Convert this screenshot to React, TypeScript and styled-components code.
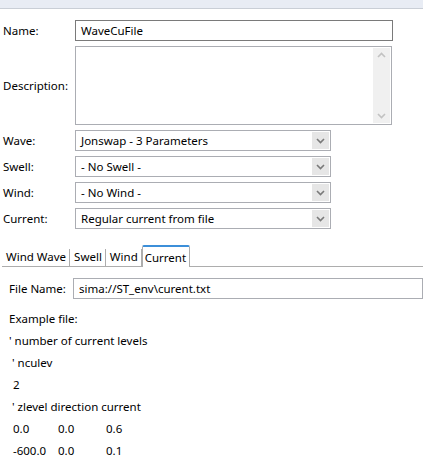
import React from 'react';
import styled, { createGlobalStyle } from 'styled-components';

const GlobalStyle = createGlobalStyle`
    html, body {
        margin: 0;
        padding: 0;
        background: #ffffff;
    }
    body {
        font-family: "Noto Sans", "Open Sans", sans-serif;
        font-size: 11.5px;
        color: #000000;
    }
`;

const Page = styled.div`
    width: 423px;
    height: 473px;
    overflow: hidden;
    background: #ffffff;
`;

const TopBar = styled.div`
    height: 8px;
    background: #e8ecf4;
    border-bottom: 1px solid #c9ced6;
`;

const Form = styled.div`
    display: grid;
    grid-template-columns: 72px auto;
    row-gap: 5px;
    padding: 11px 0 0 3px;
    align-items: center;
    justify-items: start;
`;

const Label = styled.div`
    line-height: 16px;
`;

const TextInput = styled.div<{ $width: number; $dark?: boolean }>`
    box-sizing: border-box;
    width: ${(p) => p.$width}px;
    height: 21px;
    border: 1px solid ${(p) => (p.$dark ? '#7a7a7a' : '#abadb3')};
    padding: 0 5px;
    display: flex;
    align-items: center;
    white-space: nowrap;
    overflow: hidden;
`;

const TextArea = styled.div`
    box-sizing: border-box;
    width: 317px;
    height: 79px;
    border: 1px solid #abadb3;
    display: flex;
    justify-content: flex-end;
    padding: 1px;
`;

const ScrollBar = styled.div`
    width: 17px;
    background: #f0f0f0;
    display: flex;
    flex-direction: column;
    justify-content: space-between;
    align-items: center;
    padding: 4px 0;
`;

const Select = styled.div`
    box-sizing: border-box;
    width: 256px;
    height: 21px;
    border: 1px solid #abadb3;
    display: flex;
    align-items: center;
    justify-content: space-between;
    padding: 0 1px 0 5px;
`;

const DropButton = styled.div`
    width: 17px;
    height: 17px;
    background: #e6e6e6;
    display: flex;
    align-items: center;
    justify-content: center;
`;

const TabBar = styled.div`
    display: flex;
    align-items: flex-end;
    margin: 16px 0 0 2px;
    border-bottom: 1px solid #adadad;
    height: 21px;
`;

const Tab = styled.div<{ $active?: boolean }>`
    box-sizing: border-box;
    height: ${(p) => (p.$active ? 22 : 17)}px;
    padding: ${(p) => (p.$active ? '3px 3px 0 2px' : '0 3px')};
    line-height: 16px;
    border-left: 1px solid ${(p) => (p.$active ? '#adadad' : 'transparent')};
    border-right: 1px solid #adadad;
    border-top: ${(p) => (p.$active ? '2px solid #3c8fd9' : 'none')};
    border-radius: ${(p) => (p.$active ? '2px 2px 0 0' : '0')};
    background: #ffffff;
    margin-bottom: ${(p) => (p.$active ? '-1px' : '0')};
`;

const Panel = styled.div`
    padding: 11px 0 0 9px;
`;

const FileRow = styled.div`
    display: flex;
    align-items: center;
`;

const FileLabel = styled.div`
    width: 66px;
`;

const ExampleLines = styled.div`
    display: flex;
    flex-direction: column;
    margin-top: 9px;
`;

const Line = styled.div<{ $indent?: number }>`
    height: 22px;
    line-height: 22px;
    padding-left: ${(p) => p.$indent ?? 0}px;
    white-space: pre;
`;

const Cell = styled.span<{ $width: number }>`
    display: inline-block;
    width: ${(p) => p.$width}px;
`;

const Chevron = ({ up, color = '#7a7a7a' }: { up?: boolean; color?: string }) => (
    <svg width="9" height="6" viewBox="0 0 9 6">
        <path
            d={up ? 'M1 5 L4.5 1.5 L8 5' : 'M1 1 L4.5 4.5 L8 1'}
            fill="none"
            stroke={color}
            strokeWidth="1.6"
        />
    </svg>
);

const Combo = ({ value }: { value: string }) => (
    <Select>
        <span>{value}</span>
        <DropButton>
            <Chevron />
        </DropButton>
    </Select>
);

const App = () => {
    return (
        <Page>
            <GlobalStyle />
            <TopBar />
            <Form>
                <Label>Name:</Label>
                <TextInput $width={318} $dark>WaveCuFile</TextInput>
                <Label>Description:</Label>
                <TextArea>
                    <ScrollBar>
                        <Chevron up color="#c2c2c2" />
                        <Chevron color="#c2c2c2" />
                    </ScrollBar>
                </TextArea>
                <Label>Wave:</Label>
                <Combo value="Jonswap - 3 Parameters" />
                <Label>Swell:</Label>
                <Combo value="- No Swell -" />
                <Label>Wind:</Label>
                <Combo value="- No Wind -" />
                <Label>Current:</Label>
                <Combo value="Regular current from file" />
            </Form>
            <TabBar>
                <Tab>Wind Wave</Tab>
                <Tab>Swell</Tab>
                <Tab>Wind</Tab>
                <Tab $active>Current</Tab>
            </TabBar>
            <Panel>
                <FileRow>
                    <FileLabel>File Name:</FileLabel>
                    <TextInput $width={360}>sima://ST_env\curent.txt</TextInput>
                </FileRow>
                <ExampleLines>
                    <Line>Example file:</Line>
                    <Line>' number of current levels</Line>
                    <Line $indent={3}>' nculev</Line>
                    <Line $indent={4}>2</Line>
                    <Line $indent={3}>' zlevel direction current</Line>
                    <Line $indent={4}>
                        <Cell $width={45}>0.0</Cell>
                        <Cell $width={48}>0.0</Cell>
                        <Cell $width={30}>0.6</Cell>
                    </Line>
                    <Line $indent={4}>
                        <Cell $width={45}>-600.0</Cell>
                        <Cell $width={48}>0.0</Cell>
                        <Cell $width={30}>0.1</Cell>
                    </Line>
                </ExampleLines>
            </Panel>
        </Page>
    );
};

export default App;
